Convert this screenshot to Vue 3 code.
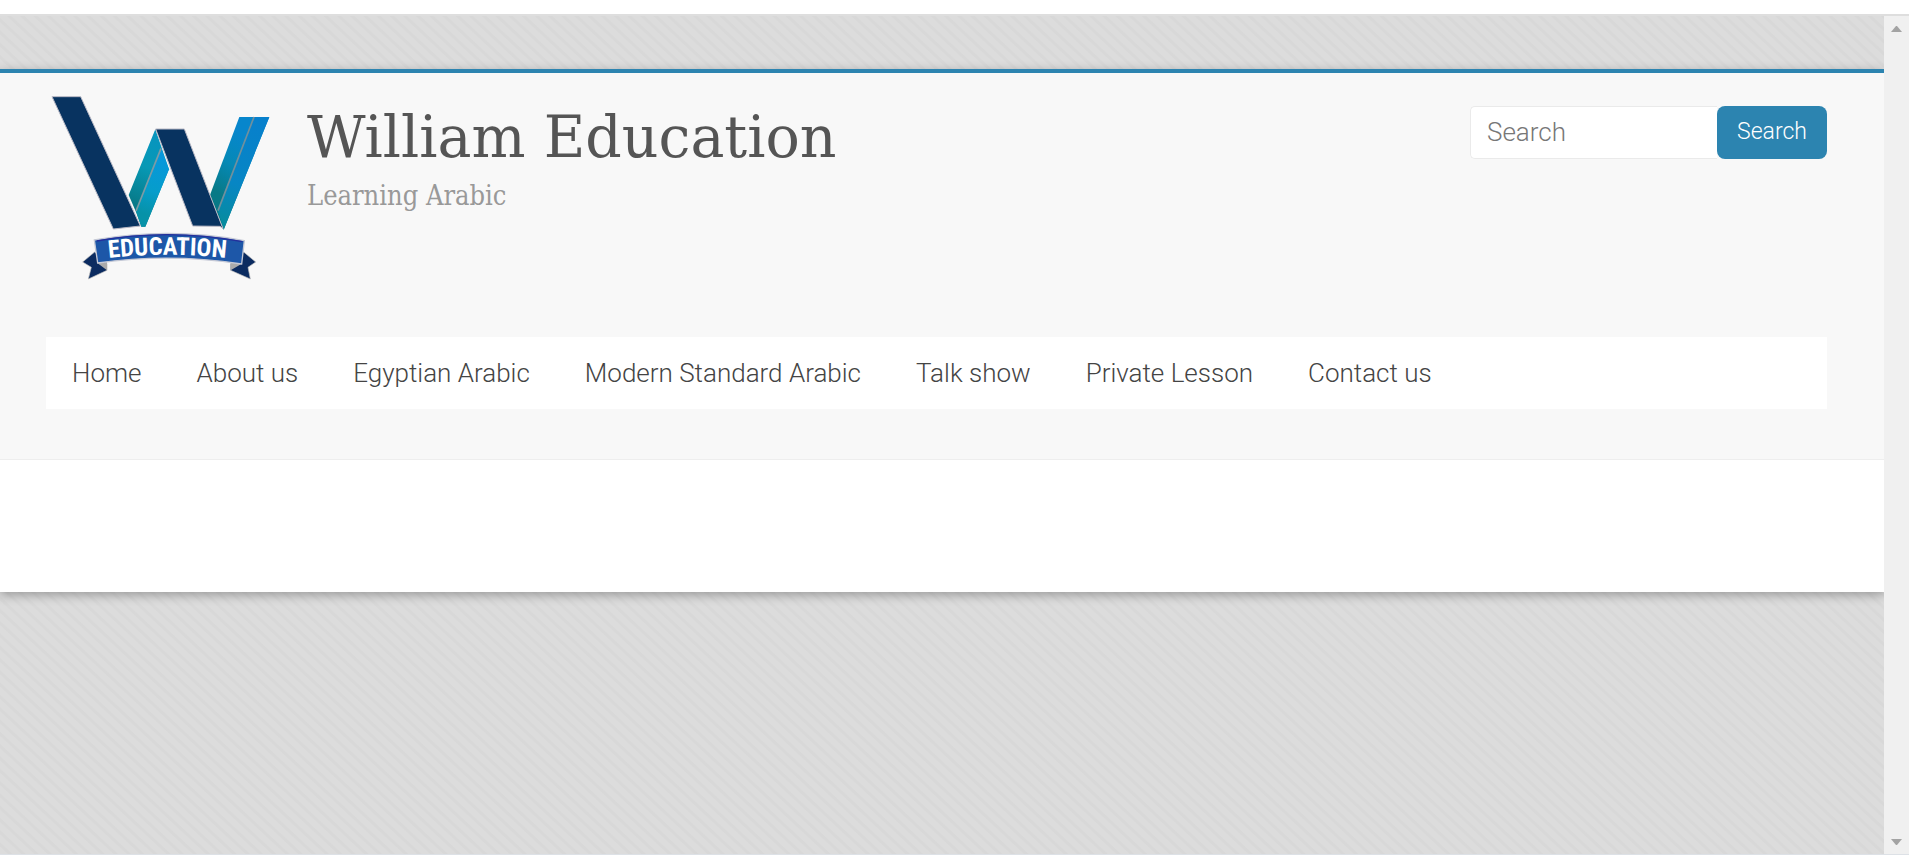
<script setup>
import { ref } from 'vue'

const query = ref('')
const links = [
  'Home',
  'About us',
  'Egyptian Arabic',
  'Modern Standard Arabic',
  'Talk show',
  'Private Lesson',
  'Contact us'
]
</script>

<template>
  <div class="window">
    <div class="topbar"></div>
    <div class="viewport">
      <div class="canvas">
        <div class="site">
          <header class="header">
            <div class="branding">
              <a href="#" class="logo" aria-label="William Education">
                <svg viewBox="48 45 702 600" width="234" height="200" aria-hidden="true">
                  <defs>
                    <linearGradient id="mid" gradientUnits="userSpaceOnUse" x1="310" y1="370" x2="380" y2="190">
                      <stop offset="0" stop-color="#087a88" />
                      <stop offset="0.6" stop-color="#0799b5" />
                      <stop offset="1" stop-color="#0795bd" />
                    </linearGradient>
                    <linearGradient id="midtop" gradientUnits="userSpaceOnUse" x1="400" y1="230" x2="340" y2="400">
                      <stop offset="0" stop-color="#0797dc" />
                      <stop offset="0.6" stop-color="#069dcb" />
                      <stop offset="1" stop-color="#0792a8" />
                    </linearGradient>
                    <linearGradient id="right" gradientUnits="userSpaceOnUse" x1="550" y1="330" x2="650" y2="170">
                      <stop offset="0" stop-color="#087986" />
                      <stop offset="0.5" stop-color="#0589b6" />
                      <stop offset="1" stop-color="#0786cc" />
                    </linearGradient>
                    <linearGradient id="edge" gradientUnits="userSpaceOnUse" x1="680" y1="120" x2="580" y2="440">
                      <stop offset="0" stop-color="#0780cc" />
                      <stop offset="0.6" stop-color="#0786c4" />
                      <stop offset="1" stop-color="#078c9c" />
                    </linearGradient>
                    <path id="arc" d="M236 534 Q414 514 602 535" />
                  </defs>
                  <path d="M376 148L296 345L318 396L334 440H346L417 268Z" fill="url(#mid)" />
                  <path d="M393 205L318 393L334 440H346L417 268Z" fill="url(#midtop)" />
                  <path d="M393 205L318 393" stroke="#7d9ba5" stroke-width="5" />
                  <path d="M628 111H718L581 449L540 345Z" fill="url(#right)" />
                  <path d="M672 111H718L581 449L564 392Z" fill="url(#edge)" />
                  <path d="M672 111L564 392" stroke="#71909d" stroke-width="5" />
                  <path d="M66 50H152L331 438L250 447Z" fill="#083360" stroke="#b9b9c5" stroke-width="3" />
                  <path d="M377 147H463L579 446L570 439L488 438Z" fill="#083360" stroke="#b9b9c5" stroke-width="3" />
                  <path d="M194 516L158 546L184 562L175 597L231 571V551Z" fill="#0b2b60" stroke="#bbb" stroke-width="2" />
                  <path d="M641 516L677 546L654 562L661 597L602 571V551Z" fill="#0b2b60" stroke="#bbb" stroke-width="2" />
                  <path d="M203 550L231 545V571ZM634 552L602 547V571Z" fill="#aaa" />
                  <path d="M193 480Q417 440 643 482L635 552Q417 518 203 549Z" fill="#1d57a8" stroke="#c5c9d6" stroke-width="4" />
                  <path d="M200 483Q417 444 637 485" fill="none" stroke="#242f9c" stroke-width="4" />
                  <text class="ribbon"><textPath href="#arc">EDUCATION</textPath></text>
                </svg>
              </a>
              <div class="titles">
                <h1><a href="#">William Education</a></h1>
                <p>Learning Arabic</p>
              </div>
              <form class="search" role="search" @submit.prevent>
                <input v-model="query" type="search" placeholder="Search" aria-label="Search" />
                <button type="submit">Search</button>
              </form>
            </div>
            <nav class="nav" aria-label="Main">
              <a v-for="link in links" :key="link" href="#">{{ link }}</a>
            </nav>
          </header>
          <main class="content"></main>
        </div>
      </div>
      <div class="scrollbar">
        <button type="button" aria-label="Scroll up">
          <svg viewBox="0 0 11 6" width="11" height="6"><path d="M0 6L5 0H6L11 6Z" fill="#a3a3a3" /></svg>
        </button>
        <button type="button" aria-label="Scroll down">
          <svg viewBox="0 0 11 6" width="11" height="6"><path d="M0 0L5 6H6L11 0Z" fill="#a3a3a3" /></svg>
        </button>
      </div>
    </div>
    <div class="bottombar"></div>
  </div>
</template>

<style>
body {
  margin: 0;
}
</style>

<style scoped>
.window {
  box-sizing: border-box;
  display: flex;
  flex-direction: column;
  min-height: 100vh;
  font-family: Roboto, "Liberation Sans", sans-serif;
  font-weight: 300;
}
.topbar {
  height: 14px;
  background: #fff;
  border-bottom: 2px solid #dedede;
}
.viewport {
  flex: 1;
  display: flex;
}
.canvas {
  flex: 1;
  min-width: 0;
  overflow: hidden;
  padding-top: 53px;
  background: repeating-linear-gradient(43deg, #dcdcdc 0 5px, #d8d8d8 6px 8px, #dcdcdc 9px);
}
.site {
  background: #fff;
  border-top: 4px solid #2c84b0;
  box-shadow: 0 3px 10px rgba(0, 0, 0, 0.3);
}
.header {
  padding: 22px 57px 50px 46px;
  background: #f8f8f8;
  border-bottom: 1px solid #eee;
}
.branding {
  display: flex;
  align-items: flex-start;
}
.logo {
  margin-bottom: 42px;
}
.logo svg {
  display: block;
}
.ribbon {
  font: bold 74px "Liberation Sans Narrow", "Arial Narrow", "Roboto Condensed", sans-serif;
  fill: #fff;
}
.titles {
  flex: 1;
  padding: 4px 0 0 27px;
  font-family: "Roboto Slab", "DejaVu Serif", serif;
}
h1 {
  margin: 0;
  font-size: 57px;
  line-height: 76px;
  font-weight: 400;
}
h1 a {
  color: #555;
  text-decoration: none;
}
p {
  margin: 3px 0 0;
  font-family: "Roboto Slab", "DejaVu Serif Condensed", "DejaVu Serif", serif;
  font-size: 27px;
  line-height: 36px;
  font-weight: 400;
  color: #999;
}
.search {
  display: flex;
  width: 357px;
  height: 53px;
  margin-top: 11px;
}
.search input {
  box-sizing: border-box;
  flex: 1;
  min-width: 0;
  padding: 0 16px 2px;
  border: 1px solid #eaeaea;
  border-right: 0;
  border-radius: 5px 0 0 5px;
  background: #fff;
  font: inherit;
  font-size: 26px;
  color: #777;
  appearance: none;
}
.search input::placeholder {
  color: #777;
  opacity: 1;
}
.search button {
  width: 110px;
  padding: 0 0 2px;
  border: 0;
  border-radius: 8px;
  background: #2c84b0;
  color: #fff;
  font: inherit;
  font-size: 23px;
}
.nav {
  display: flex;
  gap: 55px;
  padding: 0 26px;
  background: #fff;
}
.nav a {
  font-size: 26px;
  line-height: 72px;
  color: #444;
  text-decoration: none;
  white-space: nowrap;
}
.content {
  height: 132px;
}
.scrollbar {
  display: flex;
  flex-direction: column;
  justify-content: space-between;
  width: 25px;
  background: #f0f0f0;
}
.scrollbar button {
  display: flex;
  align-items: center;
  justify-content: center;
  height: 25px;
  padding: 0;
  border: 0;
  background: none;
}
.bottombar {
  height: 1px;
  background: #dde1e6;
}
</style>
